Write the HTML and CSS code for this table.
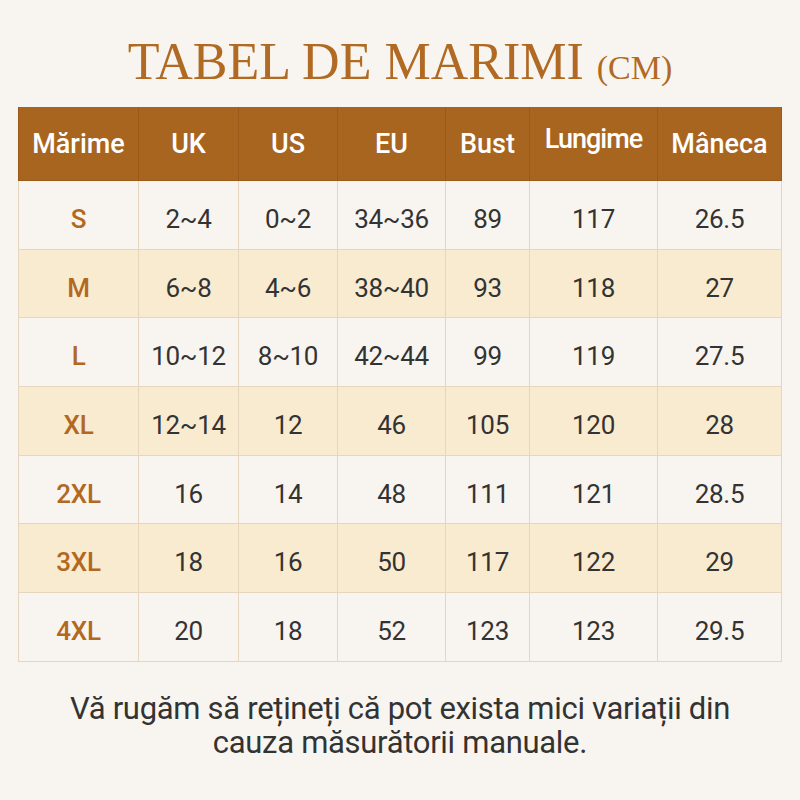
FILE: index.html
```html
<!DOCTYPE html>
<html lang="ro">
<head>
<meta charset="utf-8">
<link rel="stylesheet" href="styles.css">
</head>
<body>
<div class="page">
  <h1 class="title">TABEL DE MARIMI <span class="unit">(CM)</span></h1>
  <table class="sizes">
    <colgroup>
      <col class="c1"><col class="c2"><col class="c3"><col class="c4"><col class="c5"><col class="c6"><col class="c7">
    </colgroup>
    <thead>
      <tr><th>Mărime</th><th>UK</th><th>US</th><th>EU</th><th>Bust</th><th class="tight">Lungime</th><th>Mâneca</th></tr>
    </thead>
    <tbody>
      <tr><td class="sz">S</td><td>2~4</td><td>0~2</td><td>34~36</td><td>89</td><td>117</td><td>26.5</td></tr>
      <tr class="alt"><td class="sz">M</td><td>6~8</td><td>4~6</td><td>38~40</td><td>93</td><td>118</td><td>27</td></tr>
      <tr><td class="sz">L</td><td>10~12</td><td>8~10</td><td>42~44</td><td>99</td><td>119</td><td>27.5</td></tr>
      <tr class="alt"><td class="sz">XL</td><td>12~14</td><td>12</td><td>46</td><td>105</td><td>120</td><td>28</td></tr>
      <tr><td class="sz">2XL</td><td>16</td><td>14</td><td>48</td><td>111</td><td>121</td><td>28.5</td></tr>
      <tr class="alt"><td class="sz">3XL</td><td>18</td><td>16</td><td>50</td><td>117</td><td>122</td><td>29</td></tr>
      <tr><td class="sz">4XL</td><td>20</td><td>18</td><td>52</td><td>123</td><td>123</td><td>29.5</td></tr>
    </tbody>
  </table>
  <p class="note">Vă rugăm să rețineți că pot exista mici variații din<br>cauza măsurătorii manuale.</p>
</div>
</body>
</html>
```

FILE: styles.css
```css
html, body {
  margin: 0;
  padding: 0;
  background: #f8f5f0;
}
.page {
  width: 800px;
  height: 800px;
  display: flex;
  flex-direction: column;
  align-items: center;
  padding-top: 32px;
  box-sizing: border-box;
}
.title {
  margin: 0;
  font-family: "Liberation Serif", "DejaVu Serif", serif;
  font-weight: normal;
  font-size: 52px;
  line-height: 60px;
  color: #b06a24;
  height: 75px;
}
.unit {
  font-size: 34px;
}
.sizes {
  width: 763px;
  border-collapse: collapse;
  table-layout: fixed;
  font-family: Roboto, "Liberation Sans", sans-serif;
}
.c1 { width: 120px; }
.c2 { width: 100px; }
.c3 { width: 99px; }
.c4 { width: 108px; }
.c5 { width: 84px; }
.c6 { width: 128px; }
.c7 { width: 124px; }
.sizes th {
  background: #a8651f;
  color: #ffffff;
  font-weight: 500;
  font-size: 27px;
  height: 73px;
  padding: 0;
  border: 1px solid #9a5a1a;
  border-top: none;
  text-align: center;
}
.sizes th.tight {
  letter-spacing: -1px;
  vertical-align: top;
  padding-top: 16px;
  box-sizing: border-box;
}
.sizes td {
  height: 68.7px;
  padding: 8px 0 0 0;
  box-sizing: border-box;
  text-align: center;
  font-size: 26px;
  letter-spacing: -0.3px;
  color: #333333;
  border: 1.5px solid #e6d5bf;
  background: #f8f5f0;
}
.sizes tr.alt td {
  background: #f8ebd0;
}
.sizes td.sz {
  color: #b3681f;
  font-weight: 500;
}
.note {
  margin: 30px 0 0 0;
  font-family: Roboto, "Liberation Sans", sans-serif;
  font-size: 31px;
  line-height: 34px;
  color: #333333;
  text-align: center;
  white-space: nowrap;
  letter-spacing: -0.3px;
}
```
